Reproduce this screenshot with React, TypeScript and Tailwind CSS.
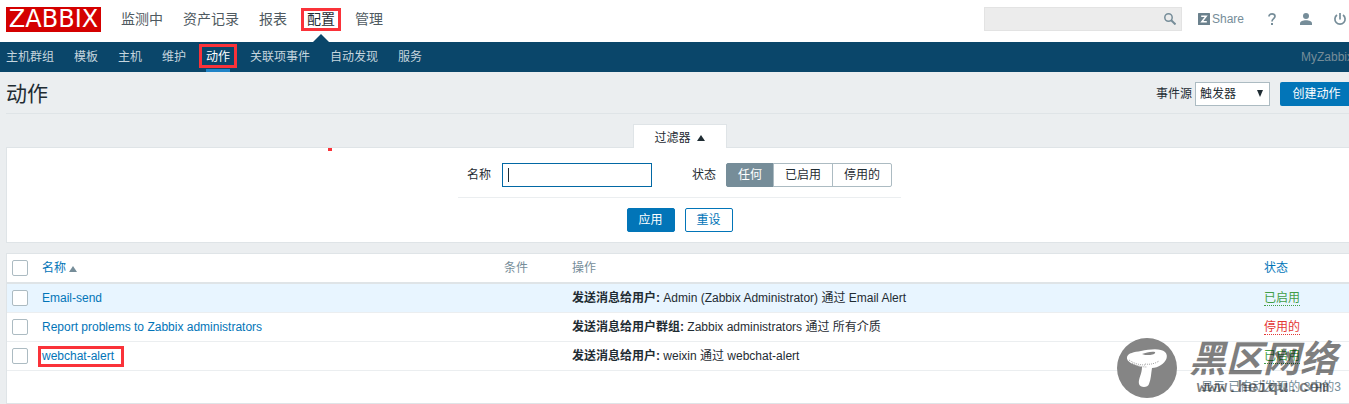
import { ReactNode } from "react";

const mainMenu = ["监测中", "资产记录", "报表", "配置", "管理"];

const subMenu = [
  "主机群组",
  "模板",
  "主机",
  "维护",
  "动作",
  "关联项事件",
  "自动发现",
  "服务",
];

const statusOptions = ["任何", "已启用", "停用的"];

interface Action {
  name: string;
  label: string;
  text: string;
  enabled: boolean;
  highlighted?: boolean;
  marked?: boolean;
}

const actions: Action[] = [
  {
    name: "Email-send",
    label: "发送消息给用户:",
    text: "Admin (Zabbix Administrator) 通过 Email Alert",
    enabled: true,
    highlighted: true,
  },
  {
    name: "Report problems to Zabbix administrators",
    label: "发送消息给用户群组:",
    text: "Zabbix administrators 通过 所有介质",
    enabled: false,
  },
  {
    name: "webchat-alert",
    label: "发送消息给用户:",
    text: "weixin 通过 webchat-alert",
    enabled: true,
    marked: true,
  },
];

function Marker({ className }: { className: string }) {
  return (
    <span
      className={`pointer-events-none absolute border-3 border-[#fa3239] ${className}`}
    />
  );
}

function Header() {
  return (
    <header className="flex h-[42px] items-center bg-white pl-1.5">
      <a
        href="#"
        className="-mt-1 flex h-[25px] w-[95px] items-center justify-center bg-[#d40000] font-['DejaVu_Sans'] text-2xl leading-6 text-white"
      >
        ZABBIX
      </a>
      <nav className="ml-5 flex h-full gap-5 pb-1 text-sm text-[#4f5a61]">
        {mainMenu.map((item) => (
          <a
            key={item}
            href="#"
            className={`relative flex items-center ${item === "配置" ? "text-[#1f2c33]" : ""}`}
          >
            {item}
            {item === "配置" && (
              <>
                <Marker className="-inset-x-1.5 top-2 h-[23px]" />
                <svg
                  viewBox="0 0 16 8"
                  className="absolute -bottom-1 left-1.5 h-2 w-4 fill-[#0a466a]"
                >
                  <path d="M8 0l8 8H0z" />
                </svg>
              </>
            )}
          </a>
        ))}
      </nav>
      <div className="ml-auto flex items-center gap-5 pr-1.5 pb-1 text-xs text-[#768d99]">
        <form className="-mr-1 flex h-6 w-[198px] items-center border border-[#e3e3e3] bg-[#ececec]">
          <input
            type="text"
            aria-label="搜索"
            className="h-full min-w-0 flex-1 px-1 outline-none"
          />
          <button type="button" aria-label="搜索" className="px-[5px]">
            <svg viewBox="0 0 12 12" className="h-3 w-3 fill-none stroke-[#768d99]">
              <circle cx="4.5" cy="4.5" r="3.7" strokeWidth="1.5" />
              <path d="M7.2 7.2l4.3 4.3" strokeWidth="2" />
            </svg>
          </button>
        </form>
        <a href="#" className="flex items-center gap-0.5">
          <svg viewBox="0 0 12 12" className="h-3 w-3">
            <rect width="12" height="12" rx="0.5" fill="#6b818d" />
            <path
              d="M3.2 3.2h5L3.8 8.8h5"
              fill="none"
              stroke="#fff"
              strokeWidth="1.5"
            />
          </svg>
          Share
        </a>
        <a href="#" aria-label="帮助" className="flex w-[15px] justify-center">
          <svg
            viewBox="0 0 8 12"
            className="h-3 w-2 fill-none stroke-[#768d99]"
            strokeWidth="1.7"
          >
            <path d="M1 3.4C1 1.8 2.2.9 4 .9s3 .9 3 2.4C7 5.6 4 5.6 4 8.4" />
            <path d="M4 10v2" strokeWidth="2" />
          </svg>
        </a>
        <a href="#" aria-label="用户">
          <svg viewBox="0 0 14 14" className="h-3.5 w-3.5 fill-[#768d99]">
            <circle cx="7" cy="4" r="3" />
            <path d="M1 13v-1.5c0-2 3-3.2 6-3.2s6 1.200 6 3.2V13z" />
          </svg>
        </a>
        <a href="#" aria-label="退出">
          <svg
            viewBox="0 0 14 14"
            className="h-3.5 w-3.5 fill-none stroke-[#768d99]"
            strokeWidth="1.7"
          >
            <path d="M7 1v6.5M4 3a5.1 5.1 0 1 0 6 0" />
          </svg>
        </a>
      </div>
    </header>
  );
}

function SubMenu() {
  return (
    <nav className="flex h-[30px] items-center gap-5 bg-[#0a466a] pl-1.5 text-xs text-[#c5d5de]">
      {subMenu.map((item) => (
        <a
          key={item}
          href="#"
          className={`relative flex h-full items-center ${
            item === "动作" ? "border-b-3 border-[#1f83c7] pt-[3px] text-white" : ""
          }`}
        >
          {item}
          {item === "动作" && <Marker className="-inset-x-[7px] top-0.5 h-6" />}
        </a>
      ))}
      <span className="ml-auto text-[#768d99]">MyZabbix</span>
    </nav>
  );
}

function PageTitle() {
  return (
    <div className="flex h-[42px] items-center border-b border-[#dfe4e7]">
      <h1 className="pt-0.5 text-[21px]">动作</h1>
      <form className="ml-auto flex items-center gap-[3px] pt-0.5">
        <label htmlFor="source">事件源</label>
        <div className="relative">
          <select
            id="source"
            className="h-6 w-[75px] appearance-none border border-[#acbbc2] bg-white pl-1 outline-none"
          >
            <option>触发器</option>
          </select>
          <svg
            viewBox="0 0 6 7"
            className="pointer-events-none absolute top-2 right-[7px] h-[7px] w-1.5 fill-[#1f2c33]"
          >
            <path d="M0 0h6L3 7z" />
          </svg>
        </div>
        <button
          type="button"
          className="ml-[7px] h-6 w-[73px] rounded-xs bg-[#0275b8] text-white"
        >
          创建动作
        </button>
      </form>
    </div>
  );
}

function Filter() {
  return (
    <section className="relative pt-2.5">
      <div className="relative z-10 mx-auto -mb-px h-6 w-[94px] border border-b-0 border-[#dfe4e7] bg-white">
        <button
          type="button"
          className="flex h-full w-full items-center justify-center gap-1.5 pt-0.5"
        >
          过滤器
          <svg viewBox="0 0 8 6" className="h-1.5 w-2 fill-[#1f2c33]">
            <path d="M4 0l4 6H0z" />
          </svg>
        </button>
      </div>
      <span className="absolute top-[34px] left-[322px] z-10 h-[3px] w-1 bg-[#fa3239]" />
      <form className="border border-[#dfe4e7] bg-white pt-[15px] pb-2.5">
        <div className="mx-auto flex w-[443px] items-center border-b border-[#ebeef0] px-[9px] pb-2.5">
          <label htmlFor="name">名称</label>
          <div className="relative ml-[11px]">
            <input
              id="name"
              type="text"
              autoFocus
              className="block h-6 w-[150px] border border-[#0268a4] px-[5px] caret-transparent outline-none"
            />
            <span className="pointer-events-none absolute top-[5px] left-1.5 h-3.5 w-px bg-[#1f2c33]" />
          </div>
          <fieldset className="ml-auto flex items-center">
            <legend className="float-left mr-2.5">状态</legend>
            <div className="flex">
              {statusOptions.map((option, i) => (
                <label
                  key={option}
                  className="-ml-px flex h-6 items-center border border-[#acbbc2] px-[11px] first:ml-0 first:rounded-l-xs last:rounded-r-xs has-checked:border-[#768d99] has-checked:bg-[#768d99] has-checked:text-white"
                >
                  <input
                    type="radio"
                    name="status"
                    defaultChecked={i === 0}
                    className="sr-only"
                  />
                  {option}
                </label>
              ))}
            </div>
          </fieldset>
        </div>
        <div className="flex justify-center gap-2.5 pt-2.5">
          <button
            type="button"
            className="h-6 w-12 rounded-xs border border-[#0275b8] bg-[#0275b8] text-white"
          >
            应用
          </button>
          <button
            type="reset"
            className="h-6 w-12 rounded-xs border border-[#0275b8] text-[#0275b8]"
          >
            重设
          </button>
        </div>
      </form>
    </section>
  );
}

function Checkbox({ label }: { label: string }) {
  return (
    <input
      type="checkbox"
      aria-label={label}
      className="-mt-px block h-4 w-4 appearance-none rounded-xs border border-[#acbbc2] bg-white"
    />
  );
}

function HeadCell({ children, className }: { children: ReactNode; className: string }) {
  return <th className={`p-0 text-left font-normal ${className}`}>{children}</th>;
}

function ActionTable() {
  return (
    <section className="mt-2.5 border border-[#dfe4e7] bg-white">
      <table className="w-full table-fixed border-separate border-spacing-0">
        <thead>
          <tr className="h-[30px] text-[#768d99] *:border-b-2 *:border-[#dfe4e7]">
            <HeadCell className="w-[35px] pl-[5px]">
              <Checkbox label="全选" />
            </HeadCell>
            <HeadCell className="w-[462px]">
              <a href="#" className="flex items-center gap-[3px] text-[#0275b8]">
                名称
                <svg viewBox="0 0 8 6" className="mt-0.5 h-1.5 w-2 fill-[#768d99]">
                  <path d="M4 0l4 6H0z" />
                </svg>
              </a>
            </HeadCell>
            <HeadCell className="w-[68px]">条件</HeadCell>
            <HeadCell className="w-auto">操作</HeadCell>
            <HeadCell className="w-[88px]">
              <a href="#" className="text-[#0275b8]">
                状态
              </a>
            </HeadCell>
          </tr>
        </thead>
        <tbody>
          {actions.map((action) => (
            <tr
              key={action.name}
              className={`h-[29px] *:border-b *:border-[#ebeef0] ${action.highlighted ? "bg-[#e8f5ff]" : ""}`}
            >
              <td className="p-0 pl-[5px]">
                <Checkbox label={action.name} />
              </td>
              <td className="p-0">
                <a href="#" className="relative text-[#0275b8]">
                  {action.name}
                  {action.marked && (
                    <Marker className="-top-[3px] -right-2.5 -left-1 h-[21px]" />
                  )}
                </a>
              </td>
              <td className="p-0" />
              <td className="p-0">
                <b>{action.label}</b> {action.text}
              </td>
              <td className="p-0">
                <a
                  href="#"
                  className={`inline-block border-b border-dotted leading-[14px] ${
                    action.enabled ? "text-[#429e47]" : "text-[#e33734]"
                  }`}
                >
                  {action.enabled ? "已启用" : "停用的"}
                </a>
              </td>
            </tr>
          ))}
        </tbody>
      </table>
      <div className="flex h-8 items-center justify-end pr-[11px] text-[#768d99]">
        显示 已自动发现的 3中的3
      </div>
    </section>
  );
}

function Watermark() {
  return (
    <div className="pointer-events-none absolute right-3 bottom-1.5 flex items-end gap-3 text-black/50">
      <svg viewBox="0 0 60 60" className="h-[60px] w-[60px]">
        <circle cx="30" cy="30" r="30" fill="#858585" />
        <path
          d="M10 19c1-4 7-5 14-6 9-2 20-3 24 1 4 4 1 10-4 13-3 2-6 3-9 3-1 6-1 11-3 16-1 4-9 4-10 0-1-5 3-10 3-17-8-2-16-5-15-10z"
          fill="#fff"
        />
        <path d="M25 16c4-1 9-3 13-2 1 2-3 3-6 3s-5 0-7-1z" fill="#858585" />
        <path
          d="M12 22c6 4 11 5 17 5M15 25c5 3 10 4 15 4M28 26c6 1 11-1 14-3"
          fill="none"
          stroke="#a8a8a8"
          strokeDasharray="1 1"
        />
      </svg>
      <div className="flex flex-col items-center">
        <span className="text-[37px] leading-9 font-bold italic">黑区网络</span>
        <span className="font-['Liberation_Mono'] text-[17px] leading-5 font-bold">
          www.heiqu.com
        </span>
      </div>
    </div>
  );
}

export default function App() {
  return (
    <div className="relative overflow-hidden bg-[#ebeef0] font-['Liberation_Sans','Noto_Sans_CJK_SC',sans-serif] text-xs text-[#1f2c33]">
      <div className="-mr-1">
        <Header />
        <SubMenu />
        <main className="pl-1.5">
          <PageTitle />
          <Filter />
          <ActionTable />
        </main>
      </div>
      <Watermark />
    </div>
  );
}
